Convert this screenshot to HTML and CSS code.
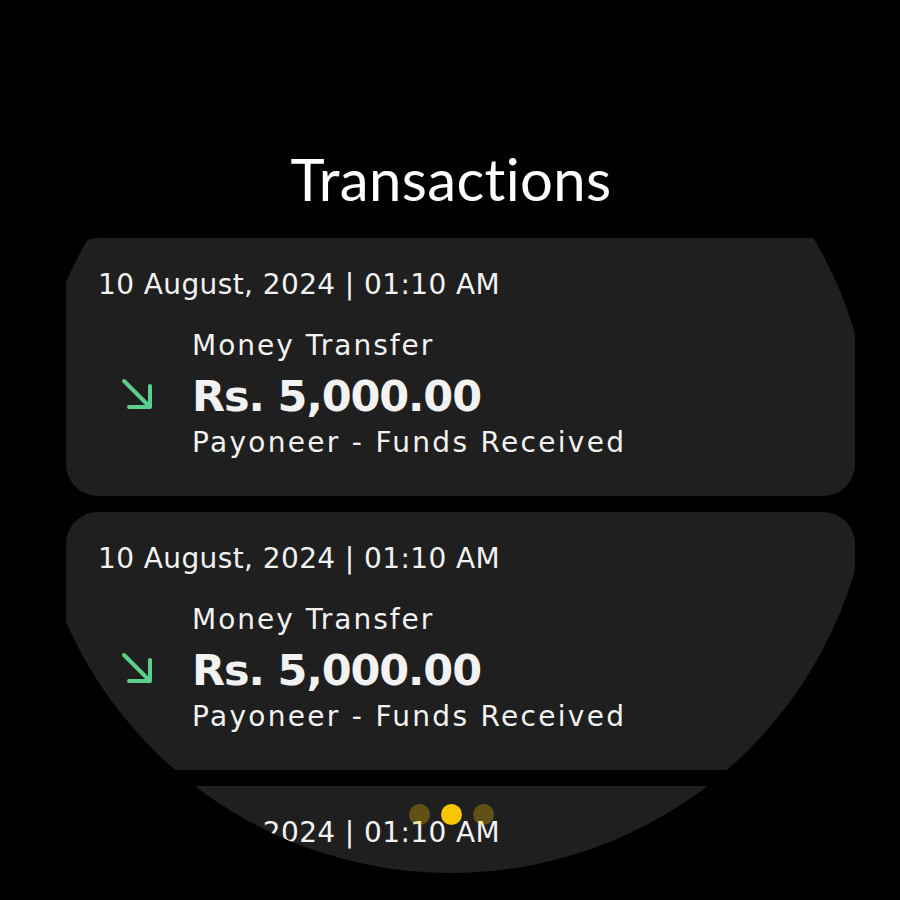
FILE: index.html
```html
<!DOCTYPE html>
<html>
<head>
<meta charset="utf-8">
<link rel="stylesheet" href="styles.css">
</head>
<body>
<div class="screen">
  <div class="watch">
    <h1 class="title">Transactions</h1>
    <div class="list">
      <div class="card">
        <div class="date">10 August, 2024 | 01:10 AM</div>
        <div class="row">
          <div class="icon">
            <svg width="34" height="34" viewBox="0 0 34 34"><path d="M4 4 L30 30 M9 30 H30 V9" fill="none" stroke="#5ccf8d" stroke-width="4" stroke-linecap="round" stroke-linejoin="round"/></svg>
          </div>
          <div class="info">
            <div class="type">Money Transfer</div>
            <div class="amount">Rs. 5,000.00</div>
            <div class="desc">Payoneer - Funds Received</div>
          </div>
        </div>
      </div>
      <div class="card">
        <div class="date">10 August, 2024 | 01:10 AM</div>
        <div class="row">
          <div class="icon">
            <svg width="34" height="34" viewBox="0 0 34 34"><path d="M4 4 L30 30 M9 30 H30 V9" fill="none" stroke="#5ccf8d" stroke-width="4" stroke-linecap="round" stroke-linejoin="round"/></svg>
          </div>
          <div class="info">
            <div class="type">Money Transfer</div>
            <div class="amount">Rs. 5,000.00</div>
            <div class="desc">Payoneer - Funds Received</div>
          </div>
        </div>
      </div>
      <div class="card">
        <div class="date">10 August, 2024 | 01:10 AM</div>
        <div class="row">
          <div class="icon">
            <svg width="34" height="34" viewBox="0 0 34 34"><path d="M4 4 L30 30 M9 30 H30 V9" fill="none" stroke="#5ccf8d" stroke-width="4" stroke-linecap="round" stroke-linejoin="round"/></svg>
          </div>
          <div class="info">
            <div class="type">Money Transfer</div>
            <div class="amount">Rs. 5,000.00</div>
            <div class="desc">Payoneer - Funds Received</div>
          </div>
        </div>
      </div>
    </div>
    <div class="dots">
      <span class="dot"></span>
      <span class="dot active"></span>
      <span class="dot"></span>
    </div>
  </div>
</div>
</body>
</html>
```
FILE: styles.css
```css
* { box-sizing: border-box; }
html, body { margin: 0; padding: 0; background: #000; }
.screen {
  width: 900px;
  height: 900px;
  background: #000;
  padding-top: 31px;
  padding-left: 30px;
}
.watch {
  position: relative;
  width: 842px;
  height: 842px;
  border-radius: 50%;
  overflow: hidden;
  background: #000;
  padding-left: 36px;
  font-family: "DejaVu Sans", "Open Sans", sans-serif;
  color: #f2f2f2;
}
.title {
  margin: 0 0 0 -36px;
  padding-top: 116px;
  height: 207px;
  width: 842px;
  text-align: center;
  font-family: "Lato", sans-serif;
  font-weight: 400;
  font-size: 58px;
  line-height: 64px;
  letter-spacing: 0.4px;
  color: #fff;
}
.list {
  display: flex;
  flex-direction: column;
  gap: 16px;
}
.card {
  width: 789px;
  height: 258px;
  flex: none;
  background: #1f1f1f;
  border-radius: 32px;
  padding: 29px 0 0 32px;
}
.date {
  font-size: 28px;
  line-height: 36px;
  letter-spacing: 0.4px;
}
.row {
  display: flex;
  align-items: center;
  margin-top: 24px;
}
.icon {
  width: 94px;
  display: flex;
  padding-left: 22px;
}
.info {
  display: flex;
  flex-direction: column;
}
.type {
  font-size: 28px;
  line-height: 38px;
  letter-spacing: 2px;
}
.desc {
  font-size: 28px;
  line-height: 34px;
  letter-spacing: 2.3px;
}
.amount {
  font-size: 43px;
  font-weight: 700;
  line-height: 60px;
  letter-spacing: -1.1px;
  padding-top: 1px;
}
.dots {
  position: absolute;
  top: 773px;
  left: 0;
  width: 842px;
  display: flex;
  justify-content: center;
  gap: 11px;
}
.dot {
  width: 21px;
  height: 21px;
  border-radius: 50%;
  background: rgba(247, 198, 0, 0.3);
}
.dot.active {
  background: #f7c600;
}
```
